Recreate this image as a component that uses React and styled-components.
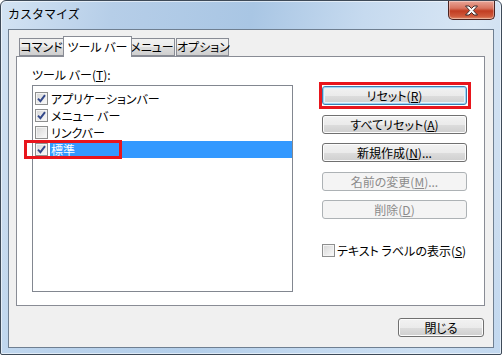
import React from 'react';
import styled, { createGlobalStyle } from 'styled-components';

const GlobalStyle = createGlobalStyle`
  html, body {
    margin: 0;
    padding: 0;
    background: #ffffff;
  }
  body {
    font-family: "Noto Sans CJK JP", "Noto Sans", sans-serif;
    font-size: 12px;
    color: #000;
  }
`

const toolbars = [
  { label: 'アプリケーションバー', checked: true },
  { label: 'メニュー バー', checked: true },
  { label: 'リンクバー', checked: false },
  { label: '標準', checked: true, selected: true, marked: true },
]

const tabs = [
  { label: 'コマンド', w: 45 },
  { label: 'ツール バー', w: 69, active: true },
  { label: 'メニュー', w: 46 },
  { label: 'オプション', w: 53, apart: true },
]

const CheckBox = ({ checked }) => (
  <BoxS>
    {checked && (
      <svg width="9" height="9" viewBox="0 0 9 9">
        <path d="M1 4.6 L3.4 7.2 L8 1.2" fill="none" stroke="#34498a" strokeWidth="1.9" />
      </svg>
    )}
  </BoxS>
)

const Key = ({ children }) => <u>{children}</u>

function App() {
  return (
    <>
      <GlobalStyle />
      <Window>
        <TitleBar>
          <Title>カスタマイズ</Title>
          <CloseBtn>
            <svg width="15" height="11" viewBox="0 0 15 11">
              <path
                d="M1.5 1 H5 L7.5 3.5 L10 1 H13.5 L9.3 5.5 L13.5 10 H10 L7.5 7.5 L5 10 H1.5 L5.7 5.5 Z"
                fill="#ffffff"
                stroke="#3a2a2a"
                strokeWidth="1"
                strokeLinejoin="round"
              />
            </svg>
          </CloseBtn>
        </TitleBar>

        <Client>
          <TabRow>
            {tabs.map(t => (
              <Tab key={t.label} $active={t.active} $apart={t.apart} $w={t.w}>{t.label}</Tab>
            ))}
          </TabRow>

          <Panel>
            <LeftCol>
              <Label>ツール バー(<Key>T</Key>):</Label>
              <ListBox>
                {toolbars.map(item => (
                  <Row key={item.label}>
                    <CheckBox checked={item.checked} />
                    <RowText $selected={item.selected}>{item.label}</RowText>
                    {item.marked && <Marker />}
                  </Row>
                ))}
              </ListBox>
            </LeftCol>

            <RightCol>
              <ButtonWrap>
                <Button $default>リセット(<Key>R</Key>)</Button>
                <BigMarker />
              </ButtonWrap>
              <Button>すべてリセット(<Key>A</Key>)</Button>
              <Button>新規作成(<Key>N</Key>)...</Button>
              <Button disabled>名前の変更(<Key>M</Key>)...</Button>
              <Button disabled>削除(<Key>D</Key>)</Button>
              <CheckLine>
                <CheckBox checked={false} />
                <span>テキスト ラベルの表示(<Key>S</Key>)</span>
              </CheckLine>
            </RightCol>
          </Panel>

          <Footer>
            <Button $w={86}>閉じる</Button>
          </Footer>
        </Client>
      </Window>
    </>
  );
}

const Window = styled.div`
  box-sizing: border-box;
  width: 502px;
  height: 355px;
  display: flex;
  flex-direction: column;
  padding: 0 7px 7px 7px;
  border: 1px solid #3e4a58;
  border-radius: 6px 6px 2px 2px;
  background:
    linear-gradient(to bottom, rgba(255,255,255,0) 60%, rgba(190,215,240,0.5)),
    linear-gradient(100deg, #d3e3f3 0%, #b6cee8 20%, #a9c6e4 45%, #c6daef 65%, #d8e6f4 85%, #c6d9ee 100%);
  box-shadow: inset 0 0 0 1px rgba(255,255,255,0.55);
  overflow: hidden;
`

const TitleBar = styled.div`
  height: 28px;
  display: flex;
  justify-content: space-between;
  align-items: flex-start;
  flex-shrink: 0;
`

const Title = styled.div`
  font-size: 12px;
  line-height: 14px;
  padding-top: 6px;
  color: #000;
`

const CloseBtn = styled.div`
  width: 47px;
  height: 19px;
  margin-right: -1px;
  box-sizing: border-box;
  border: 1px solid #4a2320;
  border-top: none;
  border-radius: 0 0 5px 5px;
  display: flex;
  align-items: center;
  justify-content: center;
  background: linear-gradient(to bottom, #e9a597 0%, #d8745f 40%, #c13d22 55%, #cf5a3c 85%, #e28e6b 100%);
  box-shadow: inset 0 0 0 1px rgba(255,255,255,0.35);
`

const Client = styled.div`
  flex: 1;
  display: flex;
  flex-direction: column;
  box-sizing: border-box;
  background: #f0f0f0;
  border: 1px solid #6f7f91;
  padding: 6px 8px 10px 7px;
`

const TabRow = styled.div`
  display: flex;
  align-items: flex-end;
  padding-left: 3px;
  margin-bottom: -1px;
  position: relative;
  z-index: 1;
`

const Tab = styled.div`
  box-sizing: border-box;
  width: ${p => p.$w}px;
  height: ${p => (p.$active ? 21 : 18)}px;
  margin: ${p => (p.$active ? '0 -2px 0 -1px' : p.$apart ? '0 0 1px 1px' : '0 0 1px -1px')};
  border: 1px solid #898c95;
  border-bottom: ${p => (p.$active ? 'none' : '1px solid #898c95')};
  background: ${p => (p.$active
    ? '#ffffff'
    : 'linear-gradient(to bottom, #f2f2f2 0%, #ebebeb 50%, #dddddd 51%, #cfcfcf 100%)')};
  position: relative;
  z-index: ${p => (p.$active ? 2 : 1)};
  font-size: 12px;
  line-height: ${p => (p.$active ? '19px' : '16px')};
  text-align: center;
  white-space: nowrap;
  font-feature-settings: "palt";
  &:first-child { margin-left: 0; }
`

const Panel = styled.div`
  height: 250px;
  box-sizing: border-box;
  display: flex;
  background: #ffffff;
  border: 1px solid #898c95;
  padding: 10px 17px 13px 15px;
`

const LeftCol = styled.div`
  display: flex;
  flex-direction: column;
  width: 263px;
`

const Label = styled.div`
  font-size: 12px;
  line-height: 15px;
  height: 15px;
  margin-bottom: 3px;
  font-feature-settings: "palt";
`

const ListBox = styled.div`
  flex: 1;
  box-sizing: border-box;
  border: 1px solid #828790;
  padding: 4px 0 0 2px;
`

const Row = styled.div`
  position: relative;
  height: 17px;
  display: flex;
  align-items: center;
  font-feature-settings: "palt";
`

const RowText = styled.div`
  flex: 1;
  height: 17px;
  line-height: 17px;
  margin-left: 2px;
  padding-left: 1px;
  background: ${p => (p.$selected ? '#3399ff' : 'transparent')};
  color: ${p => (p.$selected ? '#ffffff' : '#000000')};
  white-space: nowrap;
`

const BoxS = styled.div`
  box-sizing: border-box;
  width: 13px;
  height: 13px;
  flex-shrink: 0;
  border: 1px solid #8e8f8f;
  background: linear-gradient(135deg, #d6d6d6 0%, #ececec 60%, #fbfbfb 100%);
  box-shadow: inset 0 0 0 1px #f4f4f4;
  display: flex;
  align-items: center;
  justify-content: center;
`

const Marker = styled.div`
  position: absolute;
  left: -11px;
  top: -1px;
  width: 98px;
  height: 19px;
  box-sizing: border-box;
  border: 3px solid #e8151c;
  pointer-events: none;
`

const RightCol = styled.div`
  display: flex;
  flex-direction: column;
  align-items: flex-start;
  gap: 9.5px;
  margin-left: 29px;
  padding-top: 19px;
`

const ButtonWrap = styled.div`
  position: relative;
`

const BigMarker = styled.div`
  position: absolute;
  left: -3px;
  top: -4px;
  width: 152px;
  height: 27px;
  box-sizing: border-box;
  border: 3px solid #e8151c;
  pointer-events: none;
`

const Button = styled.div`
  box-sizing: border-box;
  width: ${p => p.$w || 145}px;
  height: 19px;
  border-radius: 3px;
  border: 1px solid ${p => (p.disabled ? '#adb2b5' : p.$default ? '#3c7fb1' : '#707070')};
  background: ${p => (p.disabled
    ? '#f4f4f4'
    : 'linear-gradient(to bottom, #f2f2f2 0%, #ebebeb 50%, #dddddd 51%, #cfcfcf 100%)')};
  box-shadow: ${p => (p.disabled
    ? 'none'
    : p.$default
      ? 'inset 0 0 0 1px #9fd5f3, inset 0 0 0 2px #e6f3fa'
      : 'inset 0 0 0 1px #fcfcfc')};
  color: ${p => (p.disabled ? '#8b8b8b' : '#000000')};
  font-size: 12px;
  line-height: 17px;
  text-align: center;
  white-space: nowrap;
  font-feature-settings: "palt";
`

const CheckLine = styled.div`
  display: flex;
  align-items: center;
  gap: 2px;
  margin-top: 14px;
  height: 15px;
  font-feature-settings: "palt";
  white-space: nowrap;
`

const Footer = styled.div`
  display: flex;
  justify-content: flex-end;
  padding-right: 1px;
  margin-top: 12px;
`

export default App;
